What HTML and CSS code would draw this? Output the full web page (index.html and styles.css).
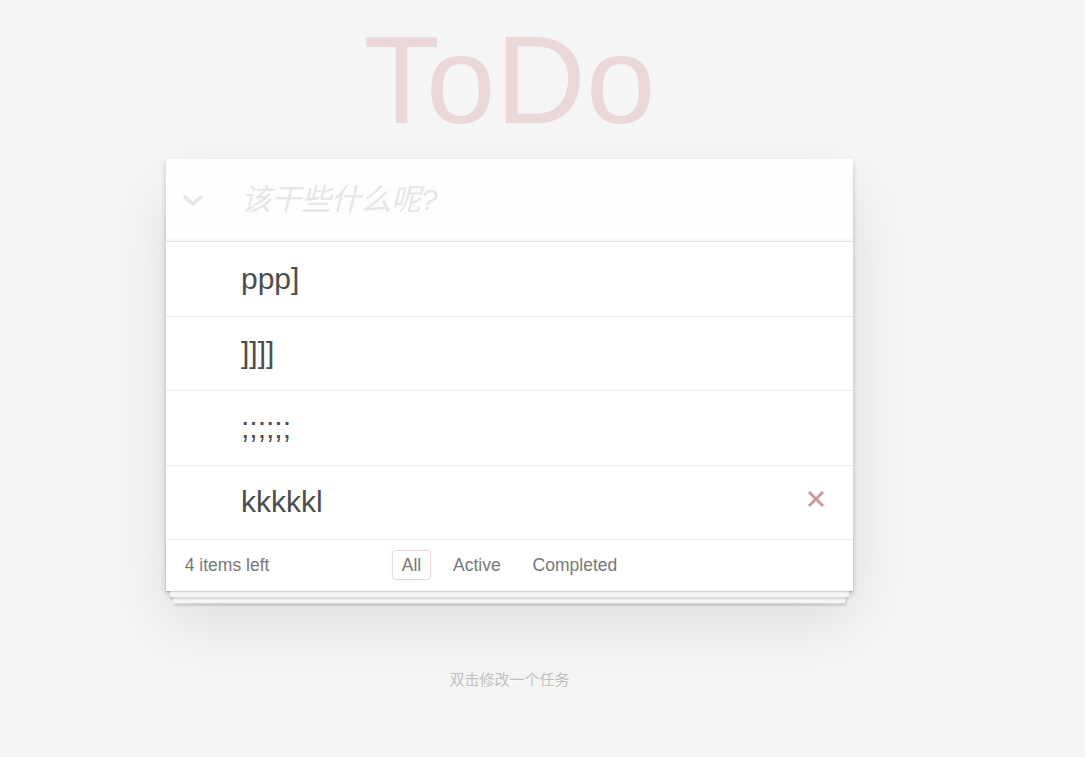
FILE: index.html
```html
<!DOCTYPE html>
<html lang="zh">
<head>
<meta charset="utf-8">
<title>ToDo</title>
<link rel="stylesheet" href="styles.css">
</head>
<body>
<div class="page">
  <h1 class="title">ToDo</h1>
  <section class="app">
    <header class="header">
      <label class="toggle-all" for="new-todo">
        <svg width="22" height="13" viewBox="0 0 22 13"><polyline points="2,2 11,10 20,2" fill="none" stroke="#e6e6e6" stroke-width="3.6"/></svg>
      </label>
      <input id="new-todo" class="new-todo" placeholder="该干些什么呢?" autofocus>
    </header>
    <ul class="list">
      <li class="item"><span class="label">ppp]</span></li>
      <li class="item"><span class="label">]]]]</span></li>
      <li class="item"><span class="label">;;;;;;</span></li>
      <li class="item"><span class="label">kkkkkl</span><button class="destroy" aria-label="删除"><svg width="18" height="18" viewBox="0 0 18 18"><path d="M2 2 L16 16 M16 2 L2 16" stroke="#cc9a9a" stroke-width="3" fill="none"/></svg></button></li>
    </ul>
    <footer class="footer">
      <span class="count">4 items left</span>
      <ul class="filters">
        <li><a class="filter selected">All</a></li>
        <li><a class="filter">Active</a></li>
        <li><a class="filter">Completed</a></li>
      </ul>
      <span class="spacer"></span>
    </footer>
  </section>
  <p class="info">双击修改一个任务</p>
</div>
</body>
</html>
```

FILE: styles.css
```css
html, body {
  margin: 0;
  padding: 0;
}
body {
  background: #f5f5f5;
  font-family: "Liberation Sans", Arial, "Noto Sans CJK SC", sans-serif;
  color: #4d4d4d;
}
.page {
  width: 687px;
  margin-left: 166px;
}
.title {
  margin: 0 0 17px;
  padding-top: 17px;
  font-size: 125px;
  line-height: 125px;
  font-weight: 400;
  text-align: center;
  color: rgba(175, 47, 47, 0.15);
}
.app {
  background: #fff;
  box-shadow: 0 2.5px 5px 0 rgba(0, 0, 0, 0.2), 0 31px 62px 0 rgba(0, 0, 0, 0.1);
}
.header {
  display: flex;
  align-items: center;
  height: 82px;
  background: rgba(0, 0, 0, 0.003);
  box-shadow: inset 0 -2.5px 1.25px rgba(0, 0, 0, 0.03);
}
.toggle-all {
  width: 75px;
  flex: none;
  display: flex;
  align-items: center;
  padding-left: 16px;
  box-sizing: border-box;
  padding-top: 1px;
}
.toggle-all svg {
  display: block;
}
.new-todo {
  flex: 1;
  border: 0;
  outline: none;
  background: transparent;
  padding: 20px 20px 20px 0;
  font-family: "Liberation Sans", Arial, "Noto Sans CJK SC", sans-serif;
  font-size: 30px;
  line-height: 42px;
  color: #4d4d4d;
  caret-color: #333;
}
.new-todo::placeholder {
  font-style: italic;
  color: #e6e6e6;
}
.list {
  list-style: none;
  margin: 0;
  padding: 0;
  border-top: 1px solid #e6e6e6;
}
.item {
  display: flex;
  align-items: center;
  border-bottom: 1px solid #ededed;
}
.label {
  flex: 1;
  padding: 18.75px 0 18.75px 75px;
  font-size: 30px;
  line-height: 36px;
  color: #4d4d4d;
  white-space: pre;
}
.destroy {
  width: 50px;
  height: 50px;
  margin-right: 12.5px;
  border: 0;
  padding: 0;
  background: none;
  display: flex;
  align-items: center;
  justify-content: center;
}
.destroy svg {
  display: block;
  margin-top: -7px;
}
.footer {
  display: grid;
  grid-template-columns: 1fr auto 1fr;
  align-items: center;
  box-sizing: border-box;
  height: 51px;
  padding: 0 18.75px;
  color: #777;
  font-size: 17.5px;
  box-shadow: 0 1.25px 1.25px rgba(0, 0, 0, 0.2),
              0 10px 0 -3.75px #f6f6f6,
              0 11.25px 1.25px -3.75px rgba(0, 0, 0, 0.2),
              0 20px 0 -7.5px #f6f6f6,
              0 21.25px 2.5px -7.5px rgba(0, 0, 0, 0.2);
}
.count {
  text-align: left;
}
.filters {
  list-style: none;
  margin: 0;
  padding: 0;
  white-space: nowrap;
}
.filters li {
  display: inline;
}
.filter {
  margin: 3.75px;
  padding: 3.75px 8.75px;
  border: 1px solid transparent;
  border-radius: 3.75px;
  color: inherit;
}
.filter.selected {
  border-color: rgba(175, 47, 47, 0.2);
}
.info {
  margin: 81px 0 0;
  font-size: 15px;
  line-height: 15px;
  text-align: center;
  color: #bfbfbf;
  text-shadow: 0 1px 0 rgba(255, 255, 255, 0.5);
}
```
